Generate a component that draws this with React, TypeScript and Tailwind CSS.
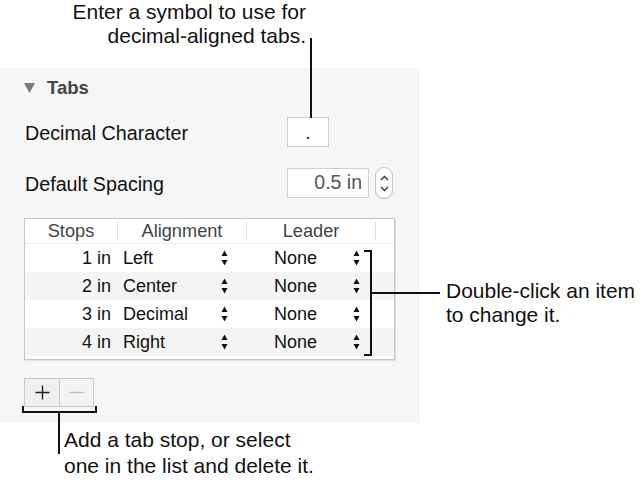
import React from "react";

// ─── Data ────────────────────────────────────────────────────────────────────

const stops = [
  { pos: "1 in", align: "Left", leader: "None" },
  { pos: "2 in", align: "Center", leader: "None" },
  { pos: "3 in", align: "Decimal", leader: "None" },
  { pos: "4 in", align: "Right", leader: "None" },
];

// ─── Small drawings ──────────────────────────────────────────────────────────

function UpDown() {
  return (
    <svg width="7" height="16" viewBox="0 0 7 16" aria-hidden>
      <path d="M3.5 0.5 L6.5 6 L0.5 6 Z" fill="#111" />
      <path d="M3.5 15.5 L6.5 10 L0.5 10 Z" fill="#111" />
    </svg>
  );
}

function Stepper() {
  return (
    <div className="ml-[6px] flex h-[32px] w-[18px] flex-col items-center justify-center gap-[5px] rounded-[9px] border border-[#c4c4c4] bg-white shadow-[0_1px_0_rgba(0,0,0,0.08)]">
      <svg width="9" height="6" viewBox="0 0 9 6" aria-hidden>
        <path d="M1 5 L4.5 1.5 L8 5" fill="none" stroke="#333" strokeWidth="1.4" />
      </svg>
      <svg width="9" height="6" viewBox="0 0 9 6" aria-hidden>
        <path d="M1 1 L4.5 4.5 L8 1" fill="none" stroke="#333" strokeWidth="1.4" />
      </svg>
    </div>
  );
}

export default function App() {
  return (
    <div
      className="relative h-[500px] w-[644px] overflow-hidden bg-white text-[#111]"
      style={{ fontFamily: '"Liberation Sans", Arial, Helvetica, sans-serif' }}
    >
      {/* Top callout */}
      <div className="h-[68px] w-[306px] text-right text-[21px] leading-[24px]">
        <div>Enter a symbol to use for</div>
        <div>decimal-aligned tabs.</div>
      </div>

      {/* Inspector panel */}
      <div className="w-[420px] bg-[#f6f6f6] pb-[16px] pl-[24px] pt-[9px]">
        <div className="flex h-[22px] items-center">
          <svg width="11" height="10" viewBox="0 0 11 10" className="mr-[12px]" aria-hidden>
            <path d="M0 0 L11 0 L5.5 10 Z" fill="#7a7a7a" />
          </svg>
          <span className="text-[18.5px] font-bold text-[#444]">Tabs</span>
        </div>

        <div className="mt-[18px] flex h-[30px] items-center">
          <span className="w-[263px] pl-[1px] pt-[3px] text-[19.7px]">Decimal Character</span>
          <div className="flex h-[30px] w-[42px] items-end justify-center border border-[#cfcfcf] bg-white pb-[3px] text-[18px] leading-[20px]">
            .
          </div>
        </div>

        <div className="mt-[21px] flex h-[30px] items-center">
          <span className="w-[263px] pl-[1px] pt-[3px] text-[19.7px]">Default Spacing</span>
          <div className="flex h-[30px] w-[82px] items-center justify-end border border-[#cfcfcf] bg-white pr-[6px] text-[19.5px] text-[#555]">
            0.5 in
          </div>
          <Stepper />
        </div>

        {/* Tab stops table */}
        <div className="mt-[20px] h-[142px] w-[371px] border border-[#c6c6c6] bg-white shadow-[1px_1px_0_#e2e2e2]">
          <div className="flex h-[25px] items-center border-b border-[#ececec] text-[18.2px] text-[#444]">
            <div className="w-[93px] border-r border-[#dedede] text-center leading-[18px]">Stops</div>
            <div className="w-[129px] border-r border-[#dedede] text-center leading-[18px]">Alignment</div>
            <div className="w-[129px] border-r border-[#dedede] text-center leading-[18px]">Leader</div>
          </div>
          {stops.map((s, i) => (
            <div
              key={s.pos}
              className={`flex h-[28px] items-center text-[18px] ${i % 2 === 1 ? "bg-[#f4f4f4]" : "bg-white"}`}
            >
              <div className="w-[86px] text-right">{s.pos}</div>
              <div className="ml-[12px] w-[98px]">{s.align}</div>
              <UpDown />
              <div className="ml-[46px] w-[79px]">{s.leader}</div>
              <UpDown />
            </div>
          ))}
        </div>

        {/* Add / remove */}
        <div className="mt-[18px] flex h-[29px] w-[70px] border border-[#c8c8c8]">
          <div className="flex w-[35px] items-center justify-center border-r border-[#c8c8c8] bg-[#efefef]">
            <svg width="15" height="15" viewBox="0 0 15 15" aria-hidden>
              <path d="M7.5 0.5 V14.5 M0.5 7.5 H14.5" stroke="#222" strokeWidth="1.4" />
            </svg>
          </div>
          <div className="flex flex-1 items-center justify-center bg-[#f3f3f3]">
            <svg width="15" height="15" viewBox="0 0 15 15" aria-hidden>
              <path d="M0.5 7.5 H14.5" stroke="#bdbdbd" strokeWidth="1.4" />
            </svg>
          </div>
        </div>
      </div>

      {/* Bottom callout */}
      <div className="mt-[4px] pl-[64px] text-[21px] leading-[26px]">
        <div>Add a tab stop, or select</div>
        <div>one in the list and delete it.</div>
      </div>

      {/* Right callout */}
      <div className="absolute left-[446px] top-[279px] text-[21px] leading-[24px]">
        <div>Double-click an item</div>
        <div>to change it.</div>
      </div>

      {/* Leader lines */}
      <div className="absolute left-[310px] top-[38px] h-[80px] w-[2px] bg-[#111]" />

      <div className="absolute left-[364px] top-[250px] h-[106px] w-[8px] border-y-2 border-r-2 border-[#111]" />
      <div className="absolute left-[372px] top-[292px] h-[2px] w-[68px] bg-[#111]" />

      <div className="absolute left-[22px] top-[406px] h-[7px] w-[75px] border-x-2 border-b-2 border-[#111]" />
      <div className="absolute left-[58px] top-[412px] h-[42px] w-[2px] bg-[#111]" />
    </div>
  );
}
